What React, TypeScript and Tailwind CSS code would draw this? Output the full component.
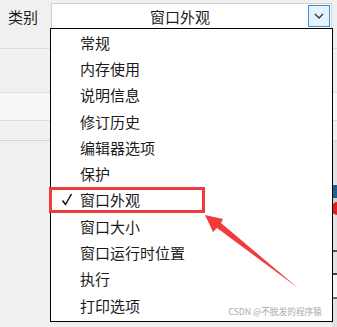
import React from "react";

const items = [
  "常规",
  "内存使用",
  "说明信息",
  "修订历史",
  "编辑器选项",
  "保护",
  "窗口外观",
  "窗口大小",
  "窗口运行时位置",
  "执行",
  "打印选项",
];

export default function App() {
  const selected = 6;

  return (
    <div className="relative w-[337px] h-[327px] overflow-hidden bg-[#f0f0f0] font-['Noto_Sans_CJK_SC','Noto_Sans',sans-serif] text-[#1b1b1b]">
      {/* background form */}
      <div className="flex items-start h-[49px] border-b border-[#dcdcdc] pt-[3px]">
        <div className="w-[51px] h-[26px] flex items-center pl-[8px] text-[15px] leading-none">类别</div>
        <div className="flex items-center w-[281px] h-[26px] bg-white border border-[#d2d2d2]">
          <div className="flex-1 text-center text-[15px] leading-none">窗口外观</div>
          <div className="w-[22px] h-[22px] mr-[1px] flex items-center justify-center border border-[#3c8fd8] bg-[#e5f1fb]">
            <svg width="10" height="6" viewBox="0 0 10 6">
              <path d="M1 1 L5 5 L9 1" fill="none" stroke="#333" strokeWidth="1.3" />
            </svg>
          </div>
        </div>
      </div>
      <div className="h-[44px] border-b border-[#dcdcdc]" />
      <div className="h-[28px] bg-[#f8f8f8] border-b border-[#dcdcdc]" />
      <div className="h-[20px] border-b border-[#d4d4d4]" />
      <div className="flex h-[186px]">
        <div className="flex-1" />
        <div className="w-[5px] flex flex-col bg-[#e2e2e2]">
          <div className="h-[44px]" />
          <div className="h-[13px] bg-[#1f5f99]" />
          <div className="h-[4px] bg-[#d0d0d0]" />
          <div className="h-[13px] rounded-l-full bg-[#e02020]" />
          <div className="h-[35px]" />
          <div className="h-[23px] border-t-2 border-[#555]" />
          <div className="h-[24px] border-t-2 border-[#444] bg-[#f4f4f4]" />
          <div className="flex-1 border-t-2 border-[#666]" />
        </div>
      </div>

      {/* dropdown list */}
      <div className="absolute left-[50px] top-[28px] w-[283px] h-[294px] bg-white border border-black pb-[3px]">
        {items.map((t, i) => (
          <div key={t} className="relative flex items-center h-[26.3px] pl-[29px] text-[15px] leading-none">
            {i === selected && (
              <svg className="absolute left-[10px] top-[6px]" width="12" height="13" viewBox="0 0 12 13">
                <path d="M1.5 7.5 L4.5 11.5 L10.5 1" fill="none" stroke="#111" strokeWidth="1.5" />
              </svg>
            )}
            {t}
          </div>
        ))}
      </div>

      {/* annotation */}
      <div className="absolute left-[49px] top-[187px] w-[156px] h-[26px] border-[3px] border-[#ef3b3b]" />
      <svg className="absolute left-0 top-0 pointer-events-none" width="337" height="327">
        <polygon points="205,215 223,219 221,223 298,288 217,228 213,232" fill="#f23c3c" />
      </svg>
      <div className="absolute right-[15px] top-[308px] text-[8.7px] leading-none text-[#a8a8a8] whitespace-nowrap">
        CSDN @不脱发的程序猿
      </div>
    </div>
  );
}
